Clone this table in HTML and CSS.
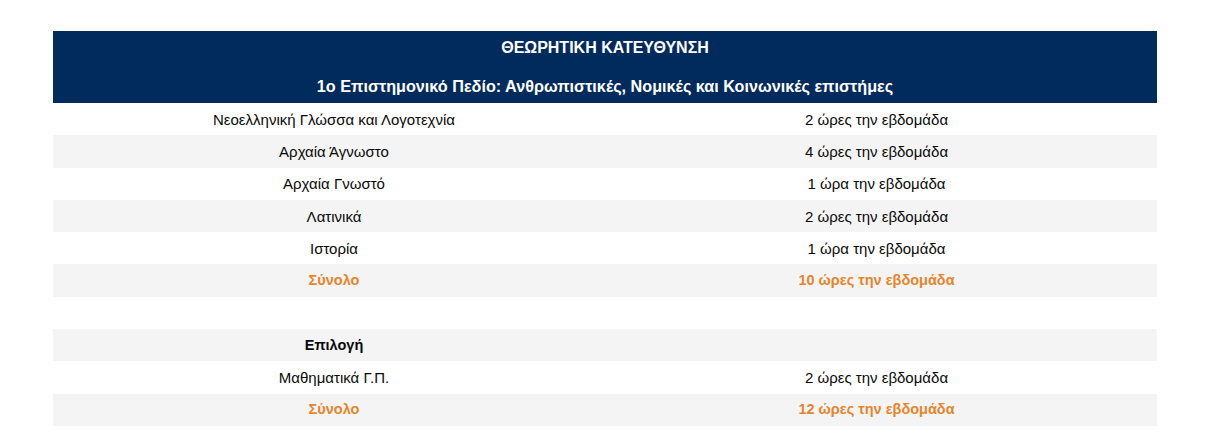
FILE: index.html
```html
<!DOCTYPE html>
<html lang="el">
<head>
<meta charset="utf-8">
<title>Θεωρητική Κατεύθυνση</title>
<link rel="stylesheet" href="styles.css">
</head>
<body>
<div class="page">
  <div class="schedule">
    <div class="head">
      <div class="head-title">ΘΕΩΡΗΤΙΚΗ ΚΑΤΕΥΘΥΝΣΗ</div>
      <div class="head-sub">1ο Επιστημονικό Πεδίο: Ανθρωπιστικές, Νομικές και Κοινωνικές επιστήμες</div>
    </div>
    <div class="row"><span class="subj">Νεοελληνική Γλώσσα και Λογοτεχνία</span><span class="hrs">2 ώρες την εβδομάδα</span></div>
    <div class="row alt"><span class="subj">Αρχαία Άγνωστο</span><span class="hrs">4 ώρες την εβδομάδα</span></div>
    <div class="row"><span class="subj">Αρχαία Γνωστό</span><span class="hrs">1 ώρα την εβδομάδα</span></div>
    <div class="row alt"><span class="subj">Λατινικά</span><span class="hrs">2 ώρες την εβδομάδα</span></div>
    <div class="row"><span class="subj">Ιστορία</span><span class="hrs">1 ώρα την εβδομάδα</span></div>
    <div class="row alt total"><span class="subj">Σύνολο</span><span class="hrs">10 ώρες την εβδομάδα</span></div>
    <div class="row"><span class="subj"></span><span class="hrs"></span></div>
    <div class="row alt"><span class="subj strong">Επιλογή</span><span class="hrs"></span></div>
    <div class="row"><span class="subj">Μαθηματικά Γ.Π.</span><span class="hrs">2 ώρες την εβδομάδα</span></div>
    <div class="row alt total"><span class="subj">Σύνολο</span><span class="hrs">12 ώρες την εβδομάδα</span></div>
  </div>
</div>
</body>
</html>
```
FILE: styles.css
```css
html, body {
  margin: 0;
  padding: 0;
  background: #ffffff;
}
body {
  font-family: "Liberation Sans", Arial, sans-serif;
  font-size: 15px;
  color: #0a0a0a;
}
.page {
  padding: 31px 53px 0 53px;
}
.schedule {
  width: 1104px;
}
.head {
  background: #012b5c;
  color: #ffffff;
  font-weight: bold;
  text-align: center;
}
.head-title {
  font-size: 16px;
  line-height: 18px;
  padding: 8px 0 7px;
}
.head-sub {
  font-size: 16.2px;
  line-height: 18px;
  padding: 13px 0 8px;
}
.row {
  display: grid;
  grid-template-columns: 562px 523px 1fr;
  height: 32.3px;
  align-items: center;
  text-align: center;
  line-height: 17px;
}
.row.alt {
  background: #f4f4f4;
}
.total {
  color: #e5852b;
  font-weight: bold;
  font-size: 14.5px;
}
.strong {
  font-weight: bold;
  font-size: 14.5px;
}
```
